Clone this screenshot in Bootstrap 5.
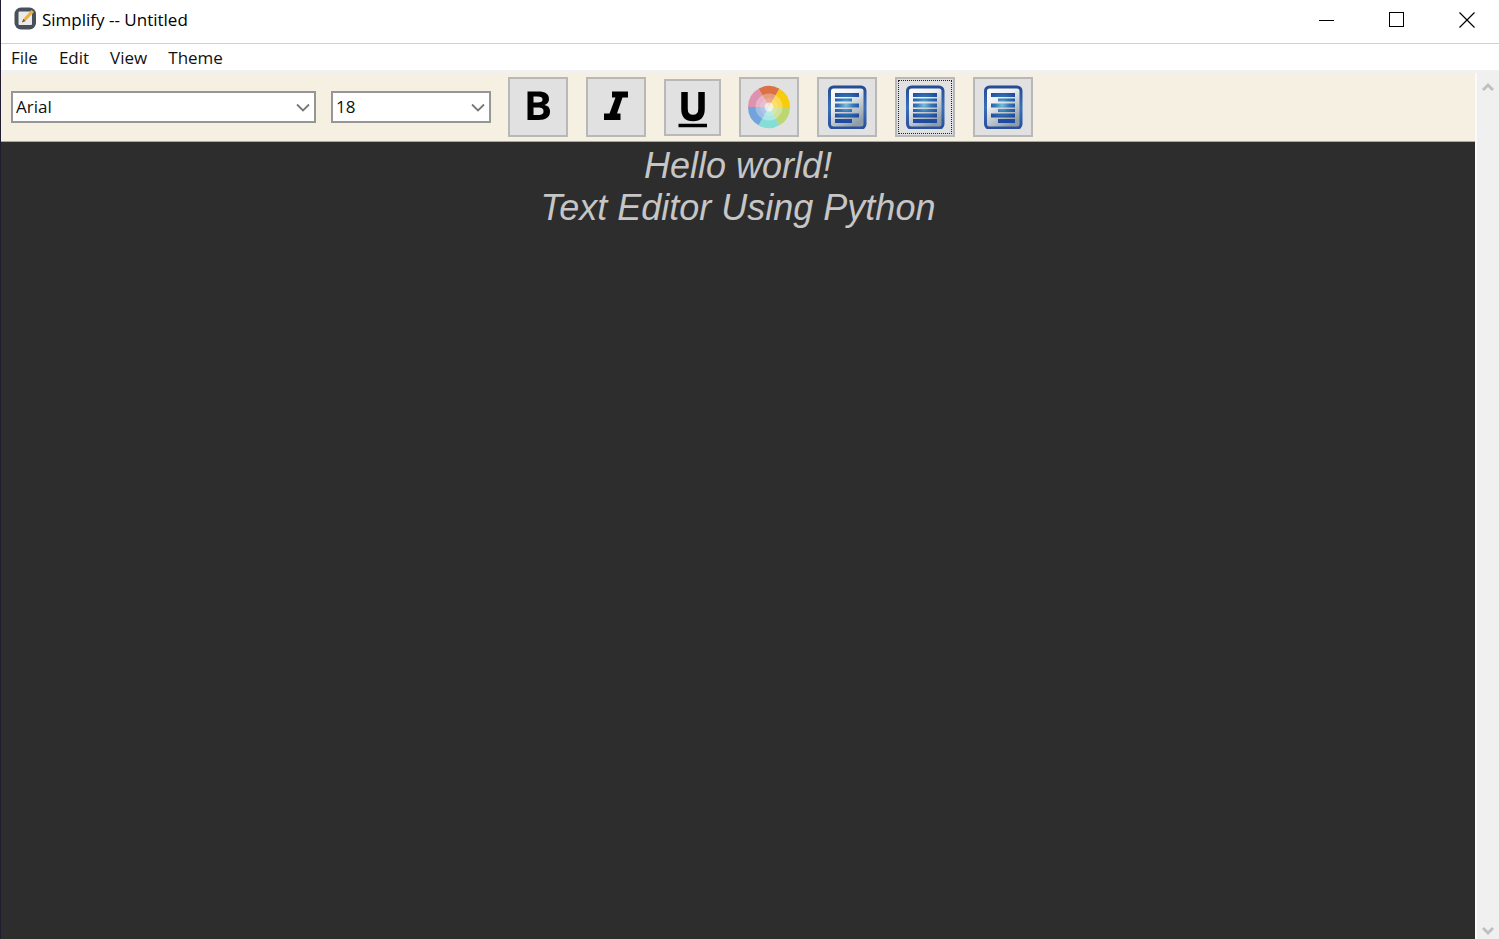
<!DOCTYPE html>
<html lang="en">
<head>
<meta charset="utf-8">
<meta name="viewport" content="width=device-width, initial-scale=1">
<title>Simplify -- Untitled</title>
<link rel="stylesheet" href="https://cdn.jsdelivr.net/npm/bootstrap@5.3.0/dist/css/bootstrap.min.css">
<style>
body { font-family: "Noto Sans", "Open Sans", sans-serif; color: #000; }
.app-window { border-left: 1px solid #211d30; }
.title-bar { height: 44px; border-bottom: 1px solid #d0d0d0; padding-left: 12px; }
.title-group { gap: 5px; padding-top: 6px; }
.window-title { font-family: "Open Sans", sans-serif; font-size: 17px; line-height: 24px; font-weight: 400; padding-top: 2px; }
.win-btn { width: 70px; height: 38px; line-height: 0; }
.win-buttons { margin-right: -2px; }
.menu-bar { height: 26px; padding-left: 10px; gap: 21px; }
.menu-bar a { font-family: "Open Sans", sans-serif; font-size: 17px; line-height: 28px; color: #111; text-decoration: none; }
.work-area { border-top: 3px solid #f1f1f1; min-height: 0; }
.tool-bar { background: #f6f0e2; border-bottom: 1px solid #aaa89c; height: 69px; padding-left: 10px; gap: 18px; }
.combos { gap: 15px; margin-right: -1px; }
.combo { appearance: none; border: 2px solid #969696; border-radius: 0; height: 32px; padding: 0 24px 0 3px; color: #111;
  font-family: "Open Sans", sans-serif; font-size: 17px; line-height: 28px;
  background: #fff url("data:image/svg+xml,%3Csvg xmlns='http://www.w3.org/2000/svg' width='14' height='9'%3E%3Cpath d='M1 1.5L7 7.500l6-6' fill='none' stroke='%23777' stroke-width='1.800'/%3E%3C/svg%3E") no-repeat right 4px center; }
.combo-family { width: 305px; }
.combo-size { width: 160px; }
.tool { width: 60px; height: 60px; background: #e1e1e1; border: 2px solid #b8b8b8; border-radius: 0; line-height: 0; }
.tool-compact { width: 57px; height: 57px; }
.tool-focused { outline: 1px dotted #222; outline-offset: -4px; }
.editor { background: #2d2d2d; color: #c6c6c6; border: 0; resize: none; outline: 0; overflow: hidden; padding: 3px 0;
  font: italic 36px/42px "Liberation Sans", Arial, sans-serif; }
.scroll-rail { width: 24px; background: #f0f0f0; border-left: 2px solid #fafafa; padding: 9px 0 3px; }
.scroll-btn { line-height: 0; }
</style>
</head>
<body>
<div class="app-window d-flex flex-column vh-100 bg-white">
  <header class="title-bar d-flex align-items-start flex-shrink-0">
    <div class="title-group d-flex align-items-start">
      <svg width="24" height="24" viewBox="0 0 24 24" aria-hidden="true">
        <rect x="1.500" y="1.500" width="21.500" height="22" rx="6.500" fill="#46505b"/>
        <rect x="5.500" y="5.500" width="13.500" height="13.500" rx="1" fill="#eceae8"/>
        <path d="M18.500 4l2.500 2-8.500 9-3.500 1.500 1.300-3.500z" fill="#edb03a"/>
        <path d="M10.300 13l-1.300 3.500 3.500-1.500z" fill="#675447"/>
      </svg>
      <h1 class="window-title mb-0">Simplify -- Untitled</h1>
    </div>
    <div class="win-buttons d-flex ms-auto">
      <button type="button" class="win-btn btn p-0 border-0" aria-label="Minimize"><svg width="17" height="17"><path d="M1 9.500h15" stroke="#000"/></svg></button>
      <button type="button" class="win-btn btn p-0 border-0" aria-label="Maximize"><svg width="17" height="17"><rect x="1.500" y="1.500" width="14" height="14" fill="none" stroke="#000"/></svg></button>
      <button type="button" class="win-btn btn p-0 border-0" aria-label="Close"><svg width="17" height="17"><path d="M1.500 1.500l15 15M16.500 1.500l-15 15" stroke="#000" stroke-width="1.200"/></svg></button>
    </div>
  </header>
  <nav class="menu-bar d-flex flex-shrink-0">
    <a href="#">File</a><a href="#">Edit</a><a href="#">View</a><a href="#">Theme</a>
  </nav>
  <div class="work-area d-flex flex-grow-1">
    <main class="d-flex flex-column flex-grow-1">
      <div class="tool-bar d-flex align-items-center flex-shrink-0" role="toolbar">
        <div class="combos d-flex">
          <select class="combo combo-family" aria-label="Font family"><option>Arial</option></select>
          <select class="combo combo-size" aria-label="Font size"><option>18</option></select>
        </div>
        <button type="button" class="tool btn p-0" aria-label="Bold">
          <svg width="44" height="44" viewBox="0 0 44 44"><path fill="#000" fill-rule="evenodd" d="M11.500 6.500H22c7.500 0 11 2.500 11 7.500 0 3-1.500 5-4.500 6 4 .8 5.500 3.300 5.500 6.500 0 5.500-4 8.500-11.500 8.500h-11zM17.500 11.500v6h4c3.500 0 5-.8 5-3s-1.500-3-5-3zM17.500 22.500v7.500h4.500c4 0 5.500-1 5.500-3.700s-1.500-3.800-5.500-3.800z"/></svg>
        </button>
        <button type="button" class="tool btn p-0" aria-label="Italic">
          <svg width="44" height="44" viewBox="0 0 44 44"><path fill="#000" d="M18 6.500h16v6h-5.500l-5.500 16h3.500v6.500H10v-6.500h5.500L21.500 12.500H18z"/></svg>
        </button>
        <button type="button" class="tool tool-compact btn p-0" aria-label="Underline">
          <svg width="44" height="44" viewBox="0 0 44 44"><path d="M13.500 7v17q0 9 8.500 9t8.500-9V7" fill="none" stroke="#000" stroke-width="6.500"/><path d="M7.500 40.500h28.500" stroke="#000" stroke-width="3.500"/></svg>
        </button>
        <button type="button" class="tool btn p-0" aria-label="Text color">
          <svg width="44" height="44" viewBox="-22 -22 44 44">
            <path d="M0 0L-10.500-18.200A21 21 0 0 1 10.500-18.200z" fill="#dd7146"/>
            <path d="M0 0L10.500-18.200A21 21 0 0 1 21 0z" fill="#f8cb0b"/>
            <path d="M0 0H21A21 21 0 0 1 10.500 18.200z" fill="#bcd670"/>
            <path d="M0 0L10.500 18.200A21 21 0 0 1-10.500 18.200z" fill="#84ded7"/>
            <path d="M0 0L-10.500 18.200A21 21 0 0 1-21 0z" fill="#73a3dc"/>
            <path d="M0 0H-21A21 21 0 0 1-10.500-18.200z" fill="#dd92b0"/>
            <circle r="13.500" fill="#fff" fill-opacity=".3"/><circle r="9" fill="#fff" fill-opacity=".15"/><circle r="4.500" fill="#fff" fill-opacity=".6"/>
          </svg>
        </button>
        <button type="button" class="tool btn p-0" aria-label="Align left">
          <svg width="44" height="44" viewBox="0 0 44 44">
            <defs>
              <linearGradient id="sheet" x1="0" y1="0" x2=".6" y2="1"><stop stop-color="#fff"/><stop offset=".4" stop-color="#eef0f3"/><stop offset="1" stop-color="#8e9da6"/></linearGradient>
              <linearGradient id="frame" x2="0" y2="1"><stop stop-color="#254b93"/><stop offset=".5" stop-color="#3970b8"/><stop offset="1" stop-color="#294f9d"/></linearGradient>
              <radialGradient id="shine" gradientUnits="userSpaceOnUse" cx="21" cy="20" r="16"><stop stop-color="#78bfdf"/><stop offset=".45" stop-color="#3477b5"/><stop offset="1" stop-color="#2049a0"/></radialGradient>
            </defs>
            <rect x="4.500" y="2" width="35.500" height="41" rx="4" fill="url(#sheet)" stroke="url(#frame)" stroke-width="3"/>
            <path fill="url(#shine)" d="M10 8h24v4H10zM10 13.500h17v3H10zM10 18.500h24v4H10zM10 24h17v3H10zM10 28.500h24v4H10zM10 34h17v4H10z"/>
          </svg>
        </button>
        <button type="button" class="tool tool-focused btn p-0" aria-label="Align center">
          <svg width="44" height="44" viewBox="0 0 44 44">
            <rect x="4.500" y="2" width="35.500" height="41" rx="4" fill="url(#sheet)" stroke="url(#frame)" stroke-width="3"/>
            <path fill="url(#shine)" d="M10 8h24v4H10zM10 13.500h24v3H10zM10 18.500h24v4H10zM10 24h24v3H10zM10 28.500h24v4H10zM10 34h24v4H10z"/>
          </svg>
        </button>
        <button type="button" class="tool btn p-0" aria-label="Align right">
          <svg width="44" height="44" viewBox="0 0 44 44">
            <rect x="4.500" y="2" width="35.500" height="41" rx="4" fill="url(#sheet)" stroke="url(#frame)" stroke-width="3"/>
            <path fill="url(#shine)" d="M10 8h24v4H10zM17 13.500h17v3H17zM10 18.500h24v4H10zM17 24h17v3H17zM10 28.500h24v4H10zM17 34h17v4H17z"/>
          </svg>
        </button>
      </div>
      <textarea class="editor flex-grow-1 w-100 text-center" aria-label="Document" spellcheck="false">Hello world!
Text Editor Using Python</textarea>
    </main>
    <div class="scroll-rail d-flex flex-column justify-content-between align-items-center flex-shrink-0">
      <button type="button" class="scroll-btn btn p-0 border-0" aria-label="Scroll up"><svg width="12" height="10"><path d="M1 8l5-5 5 5" fill="none" stroke="#c0c0c0" stroke-width="3"/></svg></button>
      <button type="button" class="scroll-btn btn p-0 border-0" aria-label="Scroll down"><svg width="12" height="10"><path d="M1 2l5 5 5-5" fill="none" stroke="#c0c0c0" stroke-width="3"/></svg></button>
    </div>
  </div>
</div>
<script src="https://cdn.jsdelivr.net/npm/bootstrap@5.3.0/dist/js/bootstrap.bundle.min.js"></script>
</body>
</html>
